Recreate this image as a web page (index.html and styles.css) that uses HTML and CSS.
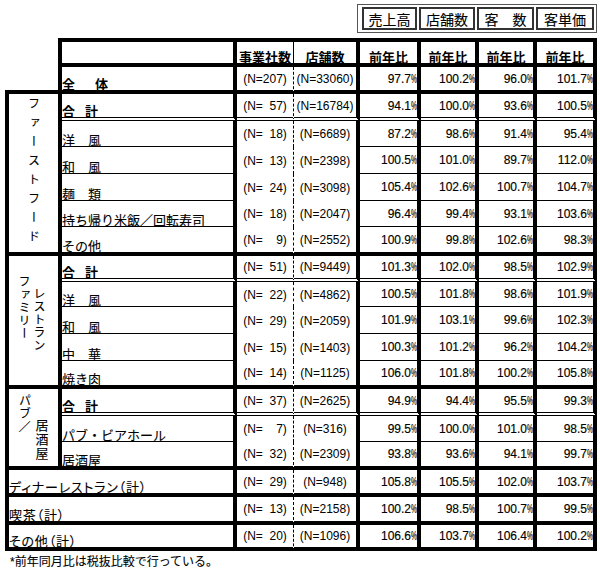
FILE: index.html
```html
<!DOCTYPE html>
<html lang="ja">
<head>
<meta charset="utf-8">
<title>前年比</title>
<link rel="stylesheet" href="styles.css">
</head>
<body>
<div class="page">
  <div class="topbox">
    <div class="tb w1">売上高</div>
    <div class="tb w2">店舗数</div>
    <div class="tb w3">客　数</div>
    <div class="tb w4">客単価</div>
  </div>
  <table class="grid">
    <colgroup>
      <col class="c0"><col class="c1"><col class="c2"><col class="c3"><col class="c4"><col class="c5"><col class="c6"><col class="c7">
    </colgroup>
    <tr class="hd h29">
      <td class="blank"></td>
      <td class="lab"></td>
      <td class="n1 h">事業社数</td>
      <td class="n2 h">店舗数</td>
      <td class="p h">前年比</td>
      <td class="p h">前年比</td>
      <td class="p h">前年比</td>
      <td class="p h">前年比</td>
    </tr>
    <tr class="bk h27">
      <td class="blank"></td>
      <td class="lab b ls20">全体</td>
      <td class="n1">(N=207)</td>
      <td class="n2">(N=33060)</td>
      <td class="p">97.7<span class="pc">%</span></td>
      <td class="p">100.2<span class="pc">%</span></td>
      <td class="p">96.0<span class="pc">%</span></td>
      <td class="p">101.7<span class="pc">%</span></td>
    </tr>
    <tr class="bd h27">
      <td class="cat" rowspan="6"><span class="vt ff">ファーストフード</span></td>
      <td class="lab b ls10">合計</td>
      <td class="n1">(N=&#8199;57)</td>
      <td class="n2">(N=16784)</td>
      <td class="p">94.1<span class="pc">%</span></td>
      <td class="p">100.0<span class="pc">%</span></td>
      <td class="p">93.6<span class="pc">%</span></td>
      <td class="p">100.5<span class="pc">%</span></td>
    </tr>
    <tr class="bt h26">
      <td class="lab">洋　風</td>
      <td class="n1">(N=&#8199;18)</td>
      <td class="n2">(N=6689)</td>
      <td class="p">87.2<span class="pc">%</span></td>
      <td class="p">98.6<span class="pc">%</span></td>
      <td class="p">91.4<span class="pc">%</span></td>
      <td class="p">95.4<span class="pc">%</span></td>
    </tr>
    <tr class="bt h27">
      <td class="lab">和　風</td>
      <td class="n1">(N=&#8199;13)</td>
      <td class="n2">(N=2398)</td>
      <td class="p">100.5<span class="pc">%</span></td>
      <td class="p">101.0<span class="pc">%</span></td>
      <td class="p">89.7<span class="pc">%</span></td>
      <td class="p">112.0<span class="pc">%</span></td>
    </tr>
    <tr class="bt h27">
      <td class="lab">麺　類</td>
      <td class="n1">(N=&#8199;24)</td>
      <td class="n2">(N=3098)</td>
      <td class="p">105.4<span class="pc">%</span></td>
      <td class="p">102.6<span class="pc">%</span></td>
      <td class="p">100.7<span class="pc">%</span></td>
      <td class="p">104.7<span class="pc">%</span></td>
    </tr>
    <tr class="bt h26">
      <td class="lab">持ち帰り米飯／回転寿司</td>
      <td class="n1">(N=&#8199;18)</td>
      <td class="n2">(N=2047)</td>
      <td class="p">96.4<span class="pc">%</span></td>
      <td class="p">99.4<span class="pc">%</span></td>
      <td class="p">93.1<span class="pc">%</span></td>
      <td class="p">103.6<span class="pc">%</span></td>
    </tr>
    <tr class="bk h29">
      <td class="lab">その他</td>
      <td class="n1">(N=&#8199;&#8199;9)</td>
      <td class="n2">(N=2552)</td>
      <td class="p">100.9<span class="pc">%</span></td>
      <td class="p">99.8<span class="pc">%</span></td>
      <td class="p">102.6<span class="pc">%</span></td>
      <td class="p">98.3<span class="pc">%</span></td>
    </tr>
    <tr class="bd h26">
      <td class="cat top" rowspan="5">
        <div class="vpair fm"><span class="vt v1">ファミリー</span><span class="vt v2">レストラン</span></div>
      </td>
      <td class="lab b ls10">合計</td>
      <td class="n1">(N=&#8199;51)</td>
      <td class="n2">(N=9449)</td>
      <td class="p">101.3<span class="pc">%</span></td>
      <td class="p">102.0<span class="pc">%</span></td>
      <td class="p">98.5<span class="pc">%</span></td>
      <td class="p">102.9<span class="pc">%</span></td>
    </tr>
    <tr class="bt h25">
      <td class="lab">洋　風</td>
      <td class="n1">(N=&#8199;22)</td>
      <td class="n2">(N=4862)</td>
      <td class="p">100.5<span class="pc">%</span></td>
      <td class="p">101.8<span class="pc">%</span></td>
      <td class="p">98.6<span class="pc">%</span></td>
      <td class="p">101.9<span class="pc">%</span></td>
    </tr>
    <tr class="bt h27">
      <td class="lab">和　風</td>
      <td class="n1">(N=&#8199;29)</td>
      <td class="n2">(N=2059)</td>
      <td class="p">101.9<span class="pc">%</span></td>
      <td class="p">103.1<span class="pc">%</span></td>
      <td class="p">99.6<span class="pc">%</span></td>
      <td class="p">102.3<span class="pc">%</span></td>
    </tr>
    <tr class="bt h27">
      <td class="lab">中　華</td>
      <td class="n1">(N=&#8199;15)</td>
      <td class="n2">(N=1403)</td>
      <td class="p">100.3<span class="pc">%</span></td>
      <td class="p">101.2<span class="pc">%</span></td>
      <td class="p">96.2<span class="pc">%</span></td>
      <td class="p">104.2<span class="pc">%</span></td>
    </tr>
    <tr class="bk h28">
      <td class="lab">焼き肉</td>
      <td class="n1">(N=&#8199;14)</td>
      <td class="n2">(N=1125)</td>
      <td class="p">106.0<span class="pc">%</span></td>
      <td class="p">101.8<span class="pc">%</span></td>
      <td class="p">100.2<span class="pc">%</span></td>
      <td class="p">105.8<span class="pc">%</span></td>
    </tr>
    <tr class="bd h27">
      <td class="cat top" rowspan="3">
        <div class="vpair pub">
          <div class="vcol"><span class="vt">パブ</span><span class="sl">／</span></div>
          <span class="vt v2">居酒屋</span>
        </div>
      </td>
      <td class="lab b ls10">合計</td>
      <td class="n1">(N=&#8199;37)</td>
      <td class="n2">(N=2625)</td>
      <td class="p">94.9<span class="pc">%</span></td>
      <td class="p">94.4<span class="pc">%</span></td>
      <td class="p">95.5<span class="pc">%</span></td>
      <td class="p">99.3<span class="pc">%</span></td>
    </tr>
    <tr class="bt h26">
      <td class="lab">パブ・ビアホール</td>
      <td class="n1">(N=&#8199;&#8199;7)</td>
      <td class="n2">(N=316)</td>
      <td class="p">99.5<span class="pc">%</span></td>
      <td class="p">100.0<span class="pc">%</span></td>
      <td class="p">101.0<span class="pc">%</span></td>
      <td class="p">98.5<span class="pc">%</span></td>
    </tr>
    <tr class="bk h28">
      <td class="lab">居酒屋</td>
      <td class="n1">(N=&#8199;32)</td>
      <td class="n2">(N=2309)</td>
      <td class="p">93.8<span class="pc">%</span></td>
      <td class="p">93.6<span class="pc">%</span></td>
      <td class="p">94.1<span class="pc">%</span></td>
      <td class="p">99.7<span class="pc">%</span></td>
    </tr>
    <tr class="bk h27">
      <td class="lab wide" colspan="2">ディナーレストラン（計）</td>
      <td class="n1">(N=&#8199;29)</td>
      <td class="n2">(N=948)</td>
      <td class="p">105.8<span class="pc">%</span></td>
      <td class="p">105.5<span class="pc">%</span></td>
      <td class="p">102.0<span class="pc">%</span></td>
      <td class="p">103.7<span class="pc">%</span></td>
    </tr>
    <tr class="bk h28">
      <td class="lab wide" colspan="2">喫茶（計）</td>
      <td class="n1">(N=&#8199;13)</td>
      <td class="n2">(N=2158)</td>
      <td class="p">100.2<span class="pc">%</span></td>
      <td class="p">98.5<span class="pc">%</span></td>
      <td class="p">100.7<span class="pc">%</span></td>
      <td class="p">99.5<span class="pc">%</span></td>
    </tr>
    <tr class="bk h26">
      <td class="lab wide" colspan="2">その他（計）</td>
      <td class="n1">(N=&#8199;20)</td>
      <td class="n2">(N=1096)</td>
      <td class="p">106.6<span class="pc">%</span></td>
      <td class="p">103.7<span class="pc">%</span></td>
      <td class="p">106.4<span class="pc">%</span></td>
      <td class="p">100.2<span class="pc">%</span></td>
    </tr>
  </table>
  <p class="note">*前年同月比は税抜比較で行っている。</p>
</div>
</body>
</html>
```
FILE: styles.css
```css
* { box-sizing: border-box; margin: 0; padding: 0; }
html, body { background: #fff; }
body {
  font-family: "Liberation Sans", "Noto Sans CJK JP", sans-serif;
  color: #000;
}
.page { width: 597px; padding: 4px 0 0 5px; }

/* top header box */
.topbox {
  display: flex;
  gap: 2px;
  width: 240px;
  height: 29px;
  margin-left: auto;
  margin-bottom: 5px;
  padding: 2px 2px 2px 4px;
  border: 1px solid #555;
}
.tb {
  display: flex;
  align-items: center;
  justify-content: center;
  border: 2px solid #333;
  font-family: "Noto Sans CJK JP", sans-serif;
  font-size: 14px;
  line-height: 1;
  -webkit-text-stroke: 0.1px #000;
}
.w1 { width: 55px; }
.w2 { width: 56px; }
.w3 { width: 57px; }
.w4 { width: 58px; }

/* main grid */
.grid {
  border-collapse: separate;
  border-spacing: 0;
  table-layout: fixed;
  width: 592px;
}
.c0 { width: 57px; }
.c1 { width: 175px; }
.c2 { width: 57px; }
.c3 { width: 66px; }
.c4 { width: 61px; }
.c5 { width: 58px; }
.c6 { width: 58px; }
.c7 { width: 60px; }
.grid td { padding: 0; line-height: 1; white-space: nowrap; }

.h25 { height: 25px; }
.h26 { height: 26px; }
.h27 { height: 27px; }
.h28 { height: 28px; }
.h29 { height: 29px; }

.blank { border-right: 4px solid #000; }
.lab {
  border-right: 4px solid #000;
  vertical-align: bottom;
  padding: 0 0 1px 0;
  font-family: "Noto Sans CJK JP", sans-serif;
  font-size: 13px;
  -webkit-text-stroke: 0.1px #000;
}
.b { font-weight: 700; -webkit-text-stroke: 0; }
.ls10 { letter-spacing: 10px; }
.ls20 { letter-spacing: 20px; }
.wide {
  border-left: 4px solid #000;
  padding-left: 1px;
  font-feature-settings: "palt" 1;
  letter-spacing: 0.8px;
}
.n1, .n2 {
  text-align: center;
  vertical-align: middle;
  font-size: 12px;
}
.n1 { border-right: 1px dashed #000; }
.n2 { border-right: 4px solid #000; }
.p {
  border-right: 4px solid #000;
  text-align: right;
  vertical-align: middle;
  padding-right: 2px;
  font-size: 12px;
  -webkit-text-stroke: 0.15px #000;
}
.pc {
  display: inline-block;
  width: 6px;
  transform: scaleX(.56);
  transform-origin: 0 50%;
}

/* header row */
.hd td:not(.blank) { border-top: 4px solid #000; border-bottom: 4px solid #000; }
.hd .n1 { border-right-style: solid; }
.h {
  vertical-align: bottom;
  text-align: center;
  padding: 0 0 1px 0;
  font-family: "Noto Sans CJK JP", sans-serif;
  font-size: 13px;
  font-weight: 700;
  -webkit-text-stroke: 0;
}

/* row rules */
tr.bt td.lab, tr.bt td.p { border-bottom: 1px solid #000; }
tr.bk td { border-bottom: 4px solid #000; }
tr.bd td:not(.cat) { border-bottom: 4px double #000; }

/* category column */
.cat {
  border-left: 4px solid #000;
  border-right: 4px solid #000;
  border-bottom: 4px solid #000;
  vertical-align: middle;
  text-align: center;
  font-family: "Noto Sans CJK JP", sans-serif;
  font-size: 12px;
  -webkit-text-stroke: 0.1px #000;
}
.cat.top { vertical-align: top; }
.vt {
  display: inline-block;
  writing-mode: vertical-rl;
  line-height: 1;
  letter-spacing: 1px;
}
.ff { letter-spacing: 7px; }
.vpair { display: flex; justify-content: center; }
.fm { gap: 3px; padding-right: 4px; }
.fm .v1 { margin-top: 6px; }
.fm .v2 { margin-top: 31px; }
.pub { gap: 5px; }
.vcol { display: flex; flex-direction: column; align-items: center; margin-top: 5px; }
.sl { font-size: 12px; line-height: 1; margin-top: 1px; }
.pub .v2 { margin-top: 30px; font-size: 13px; }

.note {
  margin-top: 4px;
  padding-left: 5px;
  font-family: "Liberation Sans", "Noto Sans CJK JP", sans-serif;
  font-size: 12px;
  line-height: 14px;
  -webkit-text-stroke: 0.1px #000;
}
```
